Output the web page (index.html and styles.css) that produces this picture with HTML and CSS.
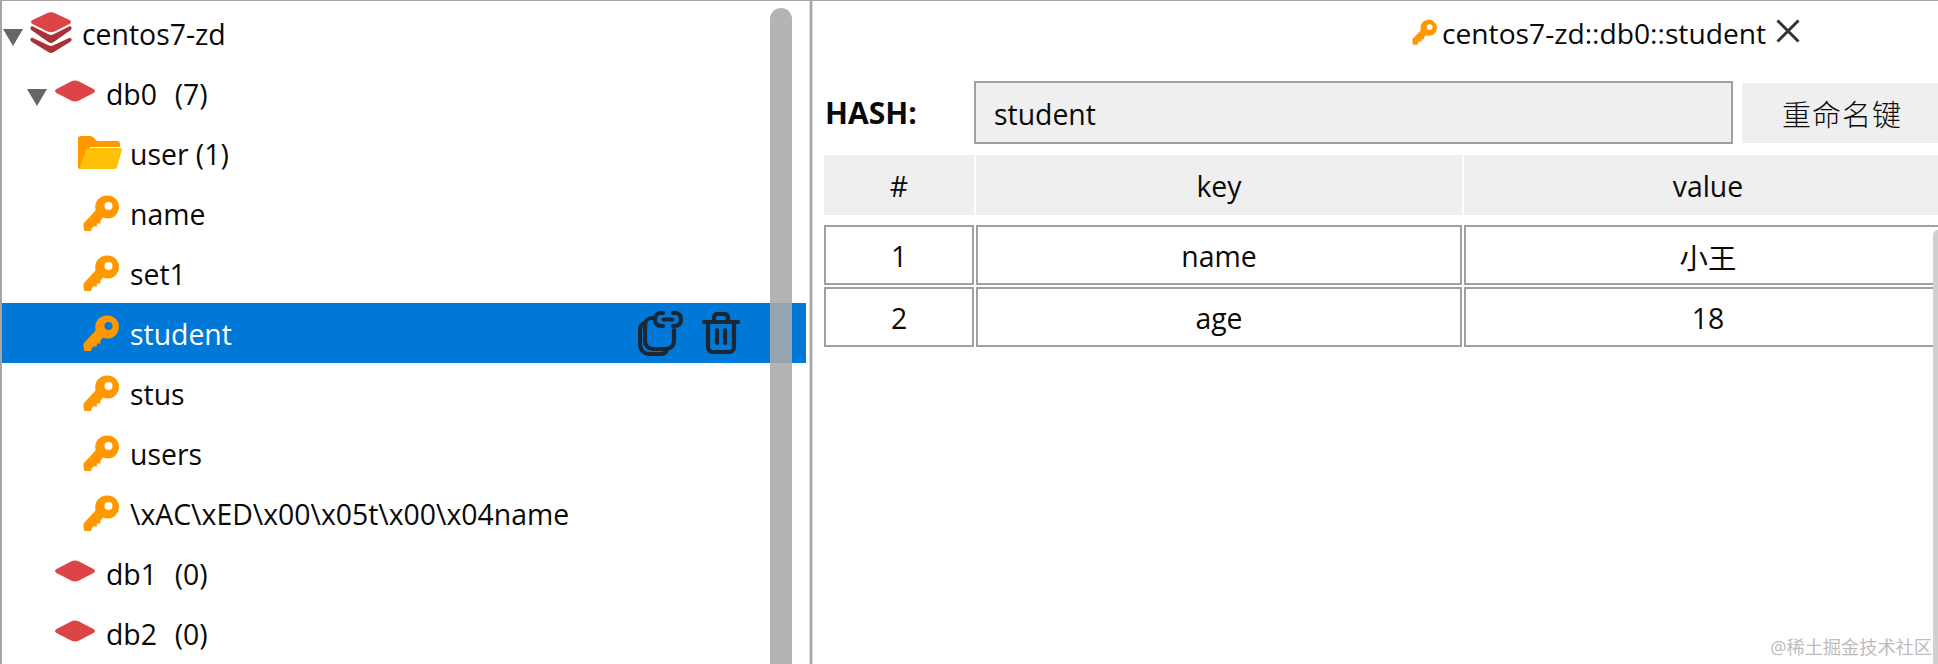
FILE: index.html
```html
<!DOCTYPE html>
<html lang="zh">
<head>
<meta charset="utf-8">
<title>centos7-zd</title>
<link rel="stylesheet" href="styles.css">
</head>
<body>
<svg class="defs" width="0" height="0" aria-hidden="true">
  <defs>
    <symbol id="key" viewBox="0 0 36 36">
      <path fill="#ff9800" fill-rule="evenodd" d="M24.5 0.5a11.5 11.5 0 0 1 0 23c-1.600 0-3-.3-4.300-.9l-2.700 2.900-.2 3h-3.300l-.2 3h-3.400l-1.900 2.300-.5 2.700H1.500L.5 32v-3.500L12.700 15.300A11.500 11.500 0 0 1 24.500.5zM25.500 7a4 4 0 1 0 0 8 4 4 0 0 0 0-8z"/>
    </symbol>
    <symbol id="diamond" viewBox="0 0 42 22">
      <path fill="#dc4446" d="M17 1.500c2.500-1.300 5.500-1.300 8 0l14.500 7.500c2 1 2 3 0 4L25 20.500c-2.500 1.300-5.500 1.300-8 0L2.500 13c-2-1-2-3 0-4z"/>
    </symbol>
  </defs>
</svg>
<div class="app">
  <aside class="tree">
    <div class="row row-root">
      <svg class="tri" viewBox="0 0 20 17"><path d="M0 0h20L10 17z"/></svg>
      <svg class="stack" viewBox="0 0 42 41">
        <path fill="#a83236" d="M3 14.500 19 22.500c1.300.6 2.700.6 4 0l16-8c1.800-.8 3 .8 2.400 2.500-.3.800-.8 1.300-1.400 1.600L23 30.500c-1.300.6-2.700.6-4 0L2 18.600c-.6-.3-1.100-.8-1.400-1.600C0 15.300 1.200 13.700 3 14.500z"/>
        <path fill="#a83236" d="M3 26 19 33.500c1.300.6 2.700.6 4 0L39 26c1.800-.8 3 .8 2.400 2.500-.3.800-.8 1.300-1.400 1.600L23 40.500c-1.300.6-2.700.6-4 0L2 30.100c-.6-.3-1.100-.8-1.400-1.600C0 26.800 1.200 25.200 3 26z"/>
        <path fill="#dc4446" d="M17.500 1c2.300-1.100 4.700-1.100 7 0l15 7c2 1 2 3 0 4l-15 7.500c-2.300 1.100-4.700 1.100-7 0L2.500 12c-2-1-2-3 0-4z"/>
      </svg>
      <span class="label">centos7-zd</span>
    </div>
    <div class="row row-db">
      <svg class="tri" viewBox="0 0 20 17"><path d="M0 0h20L10 17z"/></svg>
      <svg class="disc"><use href="#diamond"/></svg>
      <span class="label pre">db0  (7)</span>
    </div>
    <div class="row row-leaf">
      <svg class="leaf-icon" viewBox="0 0 44 36">
        <path fill="#ff9800" d="M0 4c0-2 1-3 3-3h9c1.500 0 2.500.6 3.500 1.500L19 6h20c2 0 3 1 3 3v3H12L4 34H2c-1.200 0-2-.8-2-2z"/>
        <path fill="#ffc107" d="M8 15c.5-1.300 1.500-2 3-2h31c1.500 0 2.300 1 1.900 2.500L39 32c-.5 1.300-1.500 2-3 2H4c-1.500 0-2.300-1-1.900-2.500z"/>
      </svg>
      <span class="label">user (1)</span>
    </div>
    <div class="row row-leaf">
      <svg class="leaf-icon"><use href="#key" x="5" width="36" height="36"/></svg>
      <span class="label">name</span>
    </div>
    <div class="row row-leaf">
      <svg class="leaf-icon"><use href="#key" x="5" width="36" height="36"/></svg>
      <span class="label">set1</span>
    </div>
    <div class="row row-leaf is-selected">
      <svg class="leaf-icon"><use href="#key" x="5" width="36" height="36"/></svg>
      <span class="label">student</span>
      <div class="actions">
        <svg class="act-copy" viewBox="0 0 45 45" fill="none" stroke="#1c2733" stroke-width="4.200" stroke-linecap="round" stroke-linejoin="round">
          <path d="M15 7H14C10 7 7 10 7 14V19"/>
          <path d="M7 12C3.500 13 2 15.500 2 19V33C2 39 6 43 12 43H22C26 43 28.500 41.500 29 38"/>
          <path d="M7 14V30C7 34.500 10.500 38 15 38H28C32.500 38 36 34.500 36 30V19"/>
          <path d="M25 2H23C19.500 2 17 4.500 17 8.500C17 12.500 19.500 15 23 15H25"/>
          <path d="M35 2H37C40.500 2 43 4.500 43 8.500C43 12.500 40.500 15 37 15H35"/>
          <path d="M25.500 8.500H34.500"/>
        </svg>
        <svg class="act-trash" viewBox="0 0 38 42" fill="none" stroke="#1c2733" stroke-width="4.200" stroke-linecap="round" stroke-linejoin="round">
          <path d="M2 10H36"/>
          <path d="M12 9V6C12 3.500 13.500 2 16 2H22C24.500 2 26 3.500 26 6V9"/>
          <path d="M6 11V35C6 38 8 40 11 40H27C30 40 32 38 32 35V11"/>
          <path d="M15 18V31"/>
          <path d="M23 18V31"/>
        </svg>
      </div>
    </div>
    <div class="row row-leaf">
      <svg class="leaf-icon"><use href="#key" x="5" width="36" height="36"/></svg>
      <span class="label">stus</span>
    </div>
    <div class="row row-leaf">
      <svg class="leaf-icon"><use href="#key" x="5" width="36" height="36"/></svg>
      <span class="label">users</span>
    </div>
    <div class="row row-leaf">
      <svg class="leaf-icon"><use href="#key" x="5" width="36" height="36"/></svg>
      <span class="label">\xAC\xED\x00\x05t\x00\x04name</span>
    </div>
    <div class="row row-db">
      <span class="tri-space"></span>
      <svg class="disc"><use href="#diamond"/></svg>
      <span class="label pre">db1  (0)</span>
    </div>
    <div class="row row-db">
      <span class="tri-space"></span>
      <svg class="disc"><use href="#diamond"/></svg>
      <span class="label pre">db2  (0)</span>
    </div>
    <div class="tree-scroll"></div>
  </aside>
  <div class="divider"></div>
  <main class="detail">
    <div class="tab">
      <svg class="tab-key"><use href="#key" width="25" height="26"/></svg>
      <span class="tab-title">centos7-zd::db0::student</span>
      <svg class="tab-close" viewBox="0 0 24 24" stroke="#333" stroke-width="3" fill="none"><path d="M1.500 1.500 22.500 22.500M22.500 1.500 1.500 22.500"/></svg>
    </div>
    <div class="key-bar">
      <label class="key-type">HASH:</label>
      <div class="key-name">student</div>
      <div class="rename">重命名键</div>
    </div>
    <div class="table">
      <div class="cell head">#</div>
      <div class="cell head">key</div>
      <div class="cell head">value</div>
      <div class="spacer"></div>
      <div class="cell body">1</div>
      <div class="cell body">name</div>
      <div class="cell body">小王</div>
      <div class="cell body">2</div>
      <div class="cell body">age</div>
      <div class="cell body">18</div>
    </div>
  </main>
</div>
<div class="detail-scroll"></div>
<div class="watermark">@稀土掘金技术社区</div>
</body>
</html>
```
FILE: styles.css
```css
* { box-sizing: border-box; }
html, body {
  margin: 0;
  height: 664px;
  overflow: hidden;
  background: #fff;
}
body {
  position: relative;
  font-family: "Open Sans", "Noto Sans", "Noto Sans CJK SC", sans-serif;
  font-size: 28.4px;
  color: #0a0a0a;
}
.defs { position: absolute; }
.app {
  display: flex;
  height: 664px;
  border-top: 1px solid #a6a6a6;
  border-left: 2px solid #a6a6a6;
}
.tree {
  position: relative;
  flex: 0 0 807px;
  padding-top: 2px;
  overflow: hidden;
}
.row {
  display: flex;
  align-items: center;
  height: 60px;
  width: 804px;
  white-space: nowrap;
}
.label { padding-top: 2px; }
.pre { white-space: pre; word-spacing: 1.500px; }
.row-root { padding-left: 1px; }
.row-db { padding-left: 25px; }
.row-leaf { padding-left: 76px; }
.tri { width: 20px; height: 17px; fill: #666; flex: none; margin-top: 9px; }
.tri-space { width: 20px; flex: none; }
.stack { width: 42px; height: 41px; margin: -2px 10px 0 7px; flex: none; }
.disc { width: 42px; height: 22px; margin: -4px 10px 0 7px; flex: none; }
.leaf-icon { width: 44px; height: 36px; margin-right: 8px; flex: none; }
.is-selected { background: #0078d7; color: #fff; }
.actions {
  display: flex;
  align-items: center;
  gap: 19px;
  margin-left: auto;
  margin-right: 66px;
}
.act-copy { width: 45px; height: 45px; }
.act-trash { width: 38px; height: 42px; }
.tree-scroll {
  position: absolute;
  left: 768px;
  top: 7px;
  bottom: 0;
  width: 22px;
  border-radius: 11px 11px 0 0;
  background: rgba(170, 170, 170, 0.88);
}
.divider {
  flex: 0 0 4px;
  border-left: 1px solid #ddd;
  border-right: 1px solid #ddd;
  background: #a6a6a6;
}
.detail {
  flex: 1;
  min-width: 0;
  padding-left: 11px;
  overflow: hidden;
}
.tab {
  display: flex;
  align-items: center;
  height: 60px;
  padding-left: 588px;
  margin-top: 2px;
  white-space: nowrap;
}
.tab-title { font-size: 28.200px; }
.tab-key { width: 25px; height: 26px; margin-right: 5px; margin-top: -3px; flex: none; }
.tab-close { width: 24px; height: 24px; margin-left: 10px; flex: none; margin-top: -4px; }
.key-bar {
  display: flex;
  align-items: center;
  height: 63px;
  margin-top: 18px;
}
.key-type {
  flex: 0 0 150px;
  padding-left: 1px;
  font-weight: 700;
  font-size: 30px;
}
.key-name {
  flex: 0 0 759px;
  height: 63px;
  padding: 2px 0 0 18px;
  display: flex;
  align-items: center;
  background: #efefef;
  border: 2px solid #a0a0a0;
}
.rename {
  flex: 0 0 200px;
  height: 60px;
  margin-left: 9px;
  display: flex;
  align-items: center;
  justify-content: center;
  background: #efefef;
  letter-spacing: 1px;
  font-size: 29px;
  font-weight: 300;
}
.table {
  display: grid;
  grid-template-columns: 150px 486px 488px;
  grid-template-rows: 60px 10px 62px 60px;
  gap: 0 2px;
  width: 1128px;
  margin-top: 11px;
}
.cell {
  display: flex;
  align-items: center;
  justify-content: center;
  padding-top: 2px;
}
.head { background: #efefef; }
.spacer { grid-column: 1 / -1; }
.body { border: 2px solid #a0a0a0; height: 60px; }
.detail-scroll {
  position: absolute;
  right: 0;
  top: 230px;
  bottom: 0;
  width: 5px;
  border-radius: 5px 0 0 0;
  background: #cfcfcf;
}
.watermark {
  position: absolute;
  right: 6px;
  bottom: 4px;
  font-size: 18.200px;
  line-height: 26px;
  color: #bdbdbd;
}
```
